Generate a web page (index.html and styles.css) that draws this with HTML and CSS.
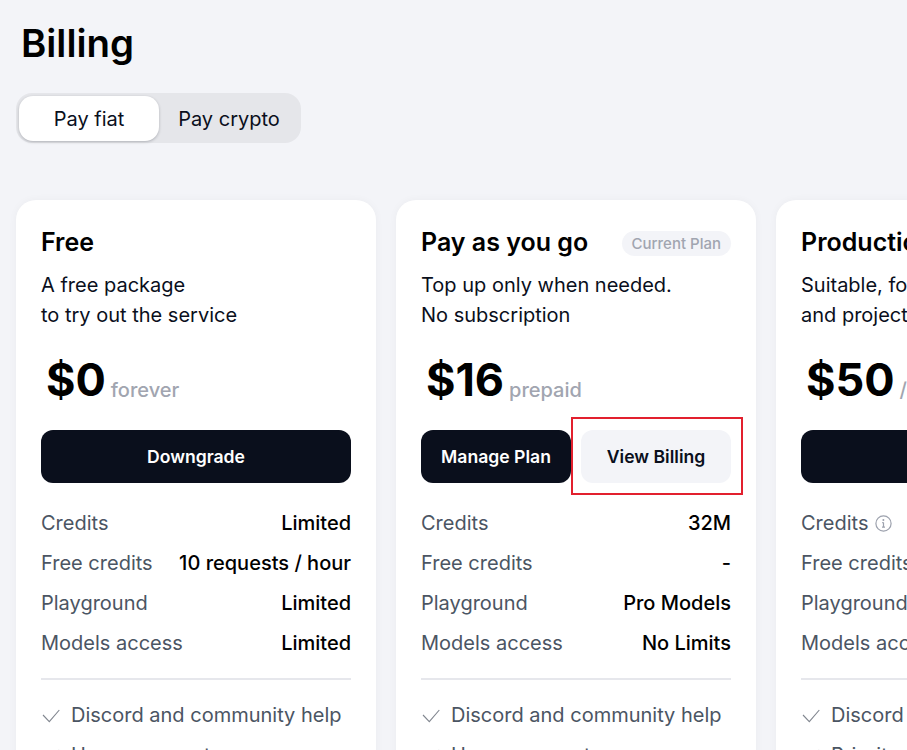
FILE: index.html
```html
<!DOCTYPE html>
<html lang="en">
<head>
<meta charset="utf-8">
<title>Billing</title>
<link rel="stylesheet" href="styles.css">
</head>
<body>
<main class="page">
  <h1 class="page-title">Billing</h1>
  <div class="toggle">
    <button class="toggle-item toggle-item-active">Pay fiat</button>
    <button class="toggle-item">Pay crypto</button>
  </div>
  <section class="plans">
    <article class="plan">
      <header class="plan-head"><h2 class="plan-name">Free</h2></header>
      <p class="plan-desc">A free package<br>to try out the service</p>
      <div class="price"><span class="price-value">$0</span><span class="price-unit">forever</span></div>
      <div class="actions"><button class="btn btn-dark">Downgrade</button></div>
      <dl class="specs">
        <div class="spec"><dt>Credits</dt><dd>Limited</dd></div>
        <div class="spec"><dt>Free credits</dt><dd>10 requests / hour</dd></div>
        <div class="spec"><dt>Playground</dt><dd>Limited</dd></div>
        <div class="spec"><dt>Models access</dt><dd>Limited</dd></div>
      </dl>
      <ul class="features">
        <li class="feature"><svg class="check" viewBox="0 0 20 18"><path d="M2 9 8.3 15.6 18.3 4"/></svg>Discord and community help</li>
        <li class="feature"><svg class="check" viewBox="0 0 20 18"><path d="M2 9 8.3 15.6 18.3 4"/></svg>Usage support</li>
      </ul>
    </article>
    <article class="plan">
      <header class="plan-head"><h2 class="plan-name">Pay as you go</h2><span class="badge">Current Plan</span></header>
      <p class="plan-desc">Top up only when needed.<br>No subscription</p>
      <div class="price"><span class="price-value">$16</span><span class="price-unit">prepaid</span></div>
      <div class="actions">
        <button class="btn btn-dark">Manage Plan</button>
        <button class="btn btn-light">View Billing<span class="marker"></span></button>
      </div>
      <dl class="specs">
        <div class="spec"><dt>Credits</dt><dd>32M</dd></div>
        <div class="spec"><dt>Free credits</dt><dd>-</dd></div>
        <div class="spec"><dt>Playground</dt><dd>Pro Models</dd></div>
        <div class="spec"><dt>Models access</dt><dd>No Limits</dd></div>
      </dl>
      <ul class="features">
        <li class="feature"><svg class="check" viewBox="0 0 20 18"><path d="M2 9 8.3 15.6 18.3 4"/></svg>Discord and community help</li>
        <li class="feature"><svg class="check" viewBox="0 0 20 18"><path d="M2 9 8.3 15.6 18.3 4"/></svg>Usage support</li>
      </ul>
    </article>
    <article class="plan">
      <header class="plan-head"><h2 class="plan-name">Production</h2></header>
      <p class="plan-desc">Suitable, for small apps<br>and projects</p>
      <div class="price"><span class="price-value">$50</span><span class="price-unit">/ month</span></div>
      <div class="actions"><button class="btn btn-dark">Upgrade</button></div>
      <dl class="specs">
        <div class="spec"><dt>Credits<svg class="info" viewBox="0 0 17 17"><circle cx="8.5" cy="8.5" r="7.6"/><path d="M8.5 7.6v4.6M7 12.2h3M7.2 7.6h1.3"/><circle class="info-dot" cx="8.4" cy="5" r="1"/></svg></dt><dd>50M</dd></div>
        <div class="spec"><dt>Free credits</dt><dd>-</dd></div>
        <div class="spec"><dt>Playground</dt><dd>Pro Models</dd></div>
        <div class="spec"><dt>Models access</dt><dd>No Limits</dd></div>
      </dl>
      <ul class="features">
        <li class="feature"><svg class="check" viewBox="0 0 20 18"><path d="M2 9 8.3 15.6 18.3 4"/></svg>Discord and community help</li>
        <li class="feature"><svg class="check" viewBox="0 0 20 18"><path d="M2 9 8.3 15.6 18.3 4"/></svg>Priority support</li>
      </ul>
    </article>
  </section>
</main>
</body>
</html>
```
FILE: styles.css
```css
* { box-sizing: border-box; }
html, body { height: 100%; overflow: hidden; }
body {
  margin: 0;
  background: #f3f4f8;
  color: #000;
  font-family: Inter, "Liberation Sans", sans-serif;
}
.page { padding: 21px 0 0 16px; }
.page-title {
  margin: 0 0 0 5px;
  font-size: 38.4px;
  line-height: 44px;
  font-weight: 600;
}
.toggle {
  display: inline-grid;
  grid-template-columns: 140px 140px;
  margin-top: 28px;
  padding: 3px 2px 2px 3px;
  background: #e5e6ea;
  border-radius: 16px;
  vertical-align: top;
}
.toggle-item {
  height: 45px;
  padding: 0;
  border: 0;
  border-radius: 14px;
  background: transparent;
  color: #0a0f1c;
  font: 400 20px/30px Inter, sans-serif;
}
.toggle-item-active {
  background: #fff;
  box-shadow: 0 1px 3px rgba(10, 15, 28, .25);
}
.plans {
  display: flex;
  gap: 20px;
  width: 1120px;
  margin-top: 57px;
}
.plan {
  flex: 0 0 360px;
  height: 700px;
  padding: 24px 25px 25px;
  background: #fff;
  border-radius: 20px;
  box-shadow: 0 0 8px rgba(10, 15, 28, .04);
}
.plan-head {
  display: flex;
  justify-content: space-between;
  align-items: center;
  height: 36px;
}
.plan-name {
  margin: 0;
  font-size: 25px;
  line-height: 36px;
  font-weight: 600;
}
.badge {
  height: 25px;
  margin-top: 2px;
  padding: 0 10px;
  border-radius: 13px;
  background: #f3f4f8;
  color: #a1a5b0;
  font-size: 15px;
  line-height: 25px;
  font-weight: 500;
}
.plan-desc {
  margin: 10px 0 0;
  color: #0a0f1c;
  font-size: 20px;
  line-height: 30px;
}
.price {
  margin-top: 18px;
  padding-left: 5px;
  height: 64px;
  line-height: 64px;
}
.price-value {
  font-size: 45px;
  font-weight: 700;
}
.price-unit {
  margin-left: 5px;
  color: #a1a5b0;
  font-size: 20px;
  font-weight: 500;
  vertical-align: -1px;
}
.actions {
  display: flex;
  gap: 10px;
  margin-top: 18px;
}
.btn {
  position: relative;
  flex: 1 1 0;
  height: 53px;
  padding: 0;
  border: 0;
  border-radius: 12px;
  font: 600 17.6px/24px Inter, sans-serif;
}
.btn-dark { background: #0a0f1c; color: #fff; }
.btn-light { background: #f3f4f8; color: #0a0f1c; }
.marker {
  position: absolute;
  top: -13px;
  right: -12px;
  bottom: -12px;
  left: -10px;
  border: 2px solid #e2202e;
}
.specs { margin: 20px 0 0; }
.spec {
  display: flex;
  justify-content: space-between;
  align-items: center;
  height: 40px;
  font-size: 20px;
}
.spec dt {
  display: flex;
  align-items: center;
  gap: 7px;
  color: #4b5563;
}
.spec dd {
  margin: 0;
  font-weight: 500;
}
.info {
  width: 17px;
  height: 17px;
  fill: none;
  stroke: #9ca1ad;
  stroke-width: 1.2;
}
.info-dot { fill: #9ca1ad; stroke: none; }
.features {
  margin: 15px 0 0;
  padding: 15px 0 0;
  border-top: 2px solid #e6e7ec;
  list-style: none;
}
.feature {
  display: flex;
  align-items: center;
  gap: 10px;
  height: 40px;
  color: #4b5563;
  font-size: 20px;
}
.check {
  flex: none;
  width: 20px;
  height: 18px;
  fill: none;
  stroke: #80868f;
  stroke-width: 1.1;
}
```
